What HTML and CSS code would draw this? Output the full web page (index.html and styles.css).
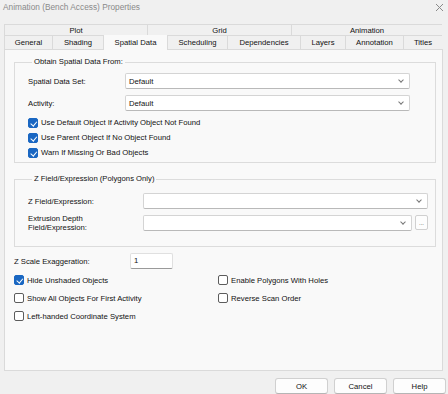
FILE: index.html
```html
<!DOCTYPE html>
<html lang="en">
<head>
    <meta charset="UTF-8">
    <title>Animation (Bench Access) Properties</title>
    <link rel="stylesheet" href="styles.css">
</head>
<body>

    <div class="titlebar">
        <span class="title">Animation (Bench Access) Properties</span>
        <svg class="close" width="9" height="9" viewBox="0 0 9 9"><path d="M1 1 L8 8 M8 1 L1 8" stroke="#8a8a8a" stroke-width="1"/></svg>
    </div>

    <div class="tabs">
        <div class="tab-row group-row">
            <div class="tab">Plot</div>
            <div class="tab">Grid</div>
            <div class="tab">Animation</div>
        </div>
        <div class="tab-row page-row">
            <div class="tab">General</div>
            <div class="tab">Shading</div>
            <div class="tab active">Spatial Data</div>
            <div class="tab">Scheduling</div>
            <div class="tab">Dependencies</div>
            <div class="tab">Layers</div>
            <div class="tab">Annotation</div>
            <div class="tab">Titles</div>
        </div>
    </div>

    <div class="panel">
        <fieldset class="group group-source">
            <legend>Obtain Spatial Data From:</legend>
            <div class="form-grid">
                <label>Spatial Data Set:</label>
                <div class="combo"><span>Default</span><i class="chev"></i></div>
                <label>Activity:</label>
                <div class="combo"><span>Default</span><i class="chev"></i></div>
            </div>
            <div class="checks">
                <div class="check"><span class="box on"></span>Use Default Object If Activity Object Not Found</div>
                <div class="check"><span class="box on"></span>Use Parent Object If No Object Found</div>
                <div class="check"><span class="box on"></span>Warn If Missing Or Bad Objects</div>
            </div>
        </fieldset>

        <fieldset class="group group-z">
            <legend>Z Field/Expression (Polygons Only)</legend>
            <div class="form-grid wide">
                <label>Z Field/Expression:</label>
                <div class="combo"><span></span><i class="chev"></i></div>
                <label class="two-line">Extrusion Depth<br>Field/Expression:</label>
                <div class="combo-row">
                    <div class="combo"><span></span><i class="chev"></i></div>
                    <div class="dots">...</div>
                </div>
            </div>
        </fieldset>

        <div class="scale-row">
            <label>Z Scale Exaggeration:</label>
            <div class="textbox">1</div>
        </div>

        <div class="options">
            <div class="check"><span class="box on"></span>Hide Unshaded Objects</div>
            <div class="check"><span class="box"></span>Enable Polygons With Holes</div>
            <div class="check"><span class="box"></span>Show All Objects For First Activity</div>
            <div class="check"><span class="box"></span>Reverse Scan Order</div>
            <div class="check"><span class="box"></span>Left-handed Coordinate System</div>
        </div>
    </div>

    <div class="buttons">
        <button>OK</button>
        <button>Cancel</button>
        <button>Help</button>
    </div>

</body>
</html>
```

FILE: styles.css
```css
* {
    margin: 0;
    padding: 0;
    box-sizing: border-box;
}

body {
    font-family: "Liberation Sans", Arial, sans-serif;
    font-size: 7.7px;
    color: #111;
    background: #f0f0f0;
    width: 448px;
    height: 394px;
    overflow: hidden;
}

/* title bar */
.titlebar {
    height: 16px;
    display: flex;
    align-items: center;
    justify-content: space-between;
    padding: 0 4px 2px 3px;
}

.titlebar .title {
    font-size: 8.3px;
    color: #8a8a8a;
}

/* tabs */
.tabs {
    margin: 8px 6px 0 4px;
}

.tab-row {
    display: grid;
    gap: 1px;
    padding: 1px 1px 0;
    background: #dadada;
}

.group-row {
    grid-template-columns: 142px 143px 150px;
}

.group-row .tab {
    height: 10px;
}

.page-row {
    grid-template-columns: 47px 50px 63px 59px 72px 44px 57px 38px;
}

.page-row .tab {
    height: 13px;
}

.tab {
    background: #f0f0f0;
    display: flex;
    align-items: center;
    justify-content: center;
    white-space: nowrap;
}

.tab.active {
    background: #f9f9f9;
    height: 15px;
    margin-top: -1px;
    margin-bottom: -1px;
    position: relative;
}

/* page */
.panel {
    margin: 0 5px 0 4px;
    height: 322px;
    background: #f9f9f9;
    border: 1px solid #dadada;
    padding: 0 6px 0 9px;
}

.group {
    border: 1px solid #dcdcdc;
    padding: 6px 0 0 13px;
}

.group legend {
    line-height: 10px;
    padding: 0 2px;
    margin-left: 4px;
}

.group-source {
    margin-top: 7px;
    height: 106px;
}

.group-z {
    margin-top: 11px;
    height: 73px;
    padding-top: 9px;
}

.form-grid {
    display: grid;
    grid-template-columns: 97px 285px;
    grid-auto-rows: 16px;
    row-gap: 6px;
    align-items: center;
}

.form-grid.wide {
    grid-template-columns: 115px 285px;
}

.two-line {
    line-height: 9px;
}

.combo {
    height: 16px;
    background: #fff;
    border: 1px solid #d4d4d4;
    border-bottom-color: #b9b9b9;
    border-radius: 2px;
    display: flex;
    align-items: center;
    justify-content: space-between;
    padding: 0 6px 0 3px;
}

.chev {
    width: 4px;
    height: 4px;
    border-right: 1px solid #777;
    border-bottom: 1px solid #777;
    transform: rotate(45deg);
    margin-top: -3px;
}

.combo-row {
    display: flex;
    gap: 3px;
}

.combo-row .combo {
    flex: 1;
}

.dots {
    width: 13px;
    height: 15px;
    background: #fdfdfd;
    border: 1px solid #d0d0d0;
    border-radius: 2px;
    text-align: center;
    line-height: 14px;
    font-size: 6px;
    color: #444;
}

/* checkboxes */
.checks {
    margin-top: 4px;
}

.check {
    height: 15px;
    display: flex;
    align-items: center;
    white-space: nowrap;
}

.box {
    width: 10px;
    height: 10px;
    border: 1px solid #5c5c5c;
    border-radius: 2px;
    background: #fff;
    margin-right: 3px;
    flex: none;
    position: relative;
}

.box.on {
    background: #1a67c2;
    border-color: #1a67c2;
}

.box.on::after {
    content: "";
    position: absolute;
    left: 2.5px;
    top: 1px;
    width: 2.5px;
    height: 4.5px;
    border-right: 1px solid #fff;
    border-bottom: 1px solid #fff;
    transform: rotate(40deg);
}

/* bottom settings */
.scale-row {
    margin-top: 6px;
    display: grid;
    grid-template-columns: 116px 43px;
    align-items: center;
    height: 16px;
}

.textbox {
    height: 16px;
    background: #fff;
    border: 1px solid #e0e0e0;
    border-bottom-color: #9a9a9a;
    border-radius: 2px;
    padding-left: 3px;
    line-height: 14px;
}

.options {
    margin-top: 2px;
    display: grid;
    grid-template-columns: 204px 1fr;
}

.options .check {
    height: 18px;
}

/* dialog buttons */
.buttons {
    display: flex;
    justify-content: flex-end;
    gap: 6px;
    padding: 7px 2px 0 0;
}

button {
    width: 53px;
    height: 16px;
    font-family: inherit;
    font-size: 7.7px;
    color: #111;
    background: #fdfdfd;
    border: 1px solid #d0d0d0;
    border-bottom-color: #b5b5b5;
    border-radius: 3px;
}
```
